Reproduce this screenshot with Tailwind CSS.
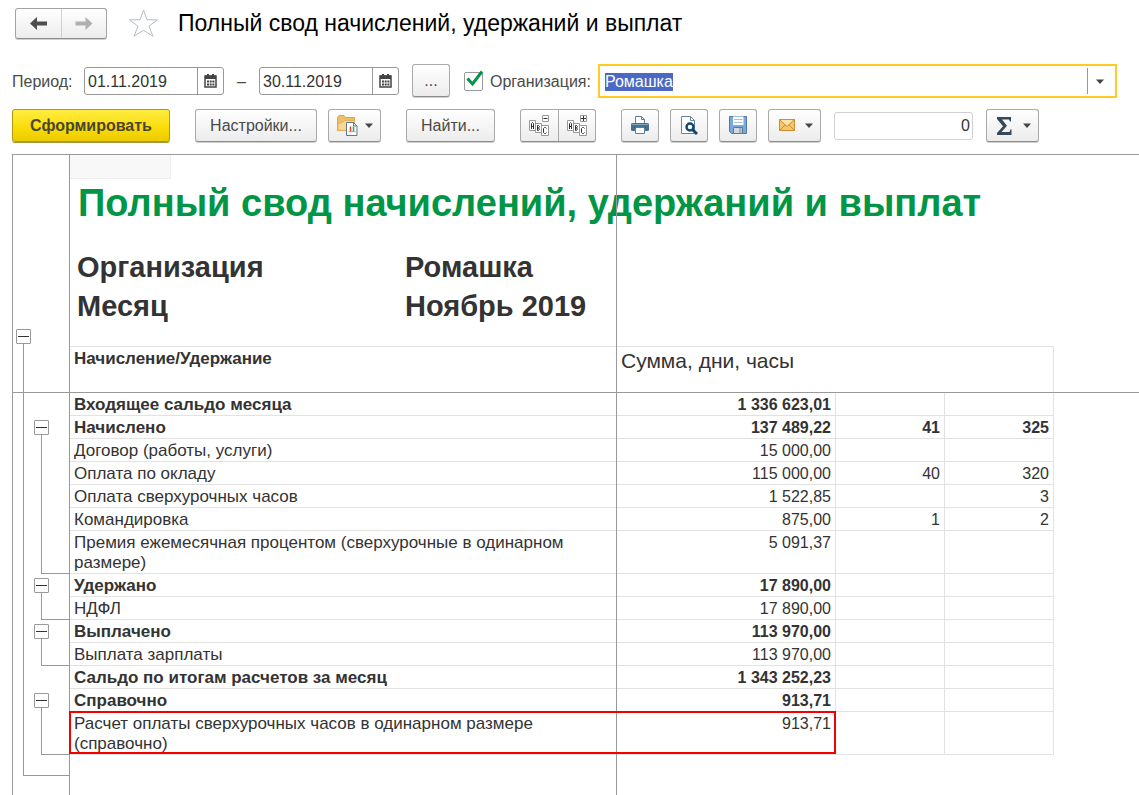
<!DOCTYPE html>
<html lang="ru">
<head>
<meta charset="utf-8">
<meta name="viewport" content="width=device-width, initial-scale=1">
<title>Полный свод начислений, удержаний и выплат</title>
<script src="https://cdn.jsdelivr.net/npm/@tailwindcss/browser@4"></script>
</head>
<body class="flex min-h-screen flex-col overflow-x-hidden bg-white font-['Liberation_Sans',Arial,sans-serif] text-base text-[#4a4a4a]">

<header class="flex h-[46px] items-center pl-[15px]">
  <nav class="flex h-[31px] rounded-[3px] border border-[#a3a3a3] border-b-[#8c8c8c] bg-linear-to-b from-white to-[#ececec] shadow-[0_1px_0_#d0d0d0]">
    <button type="button" aria-label="Назад" class="flex w-[46px] items-center justify-center border-r border-[#d0d0d0]">
      <svg width="19" height="15" viewBox="0 0 19 15"><path d="M1 7.500 8 1V5.500H18V9.500H8V14Z" fill="#4d4d4d"/></svg>
    </button>
    <button type="button" aria-label="Вперед" class="flex w-[44px] items-center justify-center">
      <svg width="18" height="15" viewBox="0 0 18 15"><path d="M17.500 7.500 10.500 1V5.500H.5V9.500H10.500V14Z" fill="#b0b0b0"/></svg>
    </button>
  </nav>
  <button type="button" aria-label="Добавить в избранное" class="ml-[21px]">
    <svg width="31" height="30" viewBox="0 0 31 30"><path d="M15.500 2 18.900 11.700 29.500 11.900 21 18.200 25 28.200 15.500 22.300 6 28.200 10 18.200 1.500 11.900 12.100 11.700Z" fill="#fff" stroke="#b4bcc4"/></svg>
  </button>
  <div class="ml-[19px] text-[23px] leading-7 whitespace-nowrap text-black">Полный свод начислений, удержаний и выплат</div>
</header>

<main class="flex flex-1 flex-col pl-3">
  <div class="mt-[18px] flex h-[34px] items-center pr-[22px]">
    <label for="from" class="w-[72px] shrink-0 pt-px">Период:</label>
    <div class="flex h-[28px] w-[140px] shrink-0 rounded-[3px] border border-[#999]">
      <input id="from" type="text" value="01.11.2019" class="w-[112px] min-w-0 pt-px pl-[3px] text-[#333] outline-none">
      <button type="button" aria-label="Выбрать дату начала" class="flex flex-1 items-center justify-center border-l border-[#999]">
        <svg width="13" height="14" viewBox="0 0 13 14"><path d="M1 2H12V13H1Z" fill="none" stroke="#444" stroke-width="1.500"/><path d="M1 1.500H12V5H1ZM3 0h2v3H3ZM8 0h2v3H8Z" fill="#444"/><path d="M3 6.500h2v2H3ZM5.700 6.500h2v2h-2ZM8.400 6.500h2v2h-2ZM3 9.500h2v2H3ZM5.700 9.500h2v2h-2ZM8.400 9.500h2v2h-2Z" fill="#444"/></svg>
      </button>
    </div>
    <label for="to" class="w-[35px] shrink-0 pt-px text-center">–</label>
    <div class="flex h-[28px] w-[140px] shrink-0 rounded-[3px] border border-[#999]">
      <input id="to" type="text" value="30.11.2019" class="w-[112px] min-w-0 pt-px pl-[3px] text-[#333] outline-none">
      <button type="button" aria-label="Выбрать дату окончания" class="flex flex-1 items-center justify-center border-l border-[#999]">
        <svg width="13" height="14" viewBox="0 0 13 14"><path d="M1 2H12V13H1Z" fill="none" stroke="#444" stroke-width="1.500"/><path d="M1 1.500H12V5H1ZM3 0h2v3H3ZM8 0h2v3H8Z" fill="#444"/><path d="M3 6.500h2v2H3ZM5.700 6.500h2v2h-2ZM8.400 6.500h2v2h-2ZM3 9.500h2v2H3ZM5.700 9.500h2v2h-2ZM8.400 9.500h2v2h-2Z" fill="#444"/></svg>
      </button>
    </div>
    <button type="button" class="ml-[13px] h-[33px] w-[38px] shrink-0 self-start rounded-[3px] border border-[#a9a9a9] border-b-[#8c8c8c] bg-linear-to-b from-white to-[#ececec] shadow-[0_1px_0_#d0d0d0]">...</button>
    <span class="relative ml-[14px] h-[19px] w-[19px] shrink-0">
      <input id="use-org" type="checkbox" aria-label="Отбор по организации" checked class="block h-[19px] w-[19px] appearance-none rounded-[2px] border border-[#999] bg-white">
      <svg class="pointer-events-none absolute -top-[2px] left-[2px]" width="18" height="18" viewBox="0 0 18 18"><path d="M1.500 8.500 6.500 14 16 1.500" fill="none" stroke="#009646" stroke-width="3"/></svg>
    </span>
    <label for="org" class="ml-[7px] w-[108px] shrink-0 pt-px">Организация:</label>
    <div class="flex h-[34px] min-w-0 flex-1 items-center border-2 border-[#ffcb22]">
      <input id="org" type="text" value="Ромашка" class="h-full min-w-0 flex-1 pt-px pl-[5px] text-[#333] outline-none selection:bg-[#4a69c4] selection:text-white">
      <button type="button" aria-label="Открыть список организаций" class="flex h-[26px] w-7 items-center justify-center border-l border-[#999] pr-1">
        <svg width="8" height="5" viewBox="0 0 8 5"><path d="M0 .5H8L4 5Z" fill="#444"/></svg>
      </button>
    </div>
  </div>

  <div class="mt-[11px] flex h-[33px] items-center">
    <button type="button" class="h-[33px] w-[158px] shrink-0 rounded-[3px] border border-[#b19a12] bg-linear-to-b from-[#ffec3d] via-[#fbdf09] to-[#eccb00] font-bold text-[#4a4636] shadow-[0_1px_0_#a8963a]">Сформировать</button>
    <button type="button" class="ml-[25px] h-[33px] w-[122px] shrink-0 rounded-[3px] border border-[#a9a9a9] border-b-[#8c8c8c] bg-linear-to-b from-white to-[#ececec] shadow-[0_1px_0_#d0d0d0]">Настройки...</button>
    <button type="button" aria-label="Варианты отчета" class="ml-[11px] flex h-[33px] w-[53px] shrink-0 items-center justify-between rounded-[3px] border border-[#a9a9a9] border-b-[#8c8c8c] bg-linear-to-b from-white to-[#ececec] pr-[7px] pl-2 shadow-[0_1px_0_#d0d0d0]">
      <svg width="21" height="21" viewBox="0 0 21 21"><path d="M.5 15.500V2.500L2 .5H7L8.500 2.500H17.500V15.500Z" fill="#edc068" stroke="#dba548"/><path d="M1 15.500V8.500L5.500 7.500 7 5.500H17.500V15.500Z" fill="#f8d793" stroke="#e3b05a"/><path d="M9.500 7.500H16.500L20 11V20.500H9.500Z" fill="#fff" stroke="#5a7890"/><path d="M16.500 7.500V11H20" fill="none" stroke="#5a7890"/><path d="M13.500 11.500V16" stroke="#e03c2b" stroke-width="1.500"/><path d="M16.500 11.500V16" stroke="#39a84a" stroke-width="1.500"/><path d="M11.500 16.500H18.500" stroke="#e09080"/></svg>
      <svg width="8" height="5" viewBox="0 0 8 5"><path d="M0 .5H8L4 5Z" fill="#444"/></svg>
    </button>
    <button type="button" class="ml-[25px] h-[33px] w-[89px] shrink-0 rounded-[3px] border border-[#a9a9a9] border-b-[#8c8c8c] bg-linear-to-b from-white to-[#ececec] shadow-[0_1px_0_#d0d0d0]">Найти...</button>
    <div class="ml-[25px] flex h-[33px] w-[76px] shrink-0 rounded-[3px] border border-[#a9a9a9] border-b-[#8c8c8c] bg-linear-to-b from-white to-[#ececec] shadow-[0_1px_0_#d0d0d0]">
      <button type="button" aria-label="Свернуть группировки" class="flex w-[38px] items-center justify-center border-r border-[#a9a9a9]">
        <svg width="21" height="21" viewBox="0 0 21 21"><g fill="#fff" stroke="#999"><path d="M.5 5.500h6v10h-6ZM6.500 8.500h6v9h-6ZM12.500 10.500h7v10h-7ZM13.500.5h6v6h-6Z"/></g><g fill="none" stroke="#333"><path d="M2.500 14V8.500L3.500 7.500 4.500 8.500V14M2.500 11.500h2M8.500 15.500v-5h1l1 1-1 1.500 1 1-1 1.500h-1M8.500 13h1M17.500 13.500l-1-1h-1l-1 1v4l1 1h1l1-1M14.500 3.500h4"/></g></svg>
      </button>
      <button type="button" aria-label="Развернуть группировки" class="flex flex-1 items-center justify-center">
        <svg width="20" height="21" viewBox="0 0 20 21"><g fill="#fff" stroke="#999"><path d="M.5 5.500h6v10h-6ZM6.500 8.500h6v9h-6ZM12.500 10.500h7v10h-7ZM13.500.5h6v6h-6Z"/></g><g fill="none" stroke="#333"><path d="M2.500 14V8.500L3.500 7.500 4.500 8.500V14M2.500 11.500h2M8.500 15.500v-5h1l1 1-1 1.500 1 1-1 1.500h-1M8.500 13h1M17.500 13.500l-1-1h-1l-1 1v4l1 1h1l1-1M14 3.500h5M16.500 1v5"/></g></svg>
      </button>
    </div>
    <button type="button" aria-label="Печать" class="ml-[25px] flex h-[33px] w-[38px] shrink-0 items-center justify-center rounded-[3px] border border-[#a9a9a9] border-b-[#8c8c8c] bg-linear-to-b from-white to-[#ececec] shadow-[0_1px_0_#d0d0d0]">
      <svg width="18" height="19" viewBox="0 0 18 19"><path d="M4.500 8V.5H10.500L13.500 3.500V8" fill="#fff" stroke="#5f7d94"/><path d="M10.500.5V3.500H13.500" fill="none" stroke="#5f7d94"/><rect y="7" width="18" height="8" rx="1.500" fill="#48708f"/><path d="M1 8.500H17" stroke="#7fa3bd"/><path d="M3 11.500H15" stroke="#2d4c63"/><path d="M4.500 11.500H13.500V17.500H4.500Z" fill="#fff" stroke="#5f7d94"/></svg>
    </button>
    <button type="button" aria-label="Предварительный просмотр" class="ml-[11px] flex h-[33px] w-[38px] shrink-0 items-center justify-center rounded-[3px] border border-[#a9a9a9] border-b-[#8c8c8c] bg-linear-to-b from-white to-[#ececec] shadow-[0_1px_0_#d0d0d0]">
      <svg width="18" height="19" viewBox="0 0 18 19"><path d="M1.500.5H10.500L14.500 4.500V17.500H1.500Z" fill="#fff" stroke="#6a8496"/><path d="M10.500.5V4.500H14.500" fill="none" stroke="#6a8496"/><circle cx="10" cy="11" r="3.500" fill="#fff" stroke="#10466f" stroke-width="2.400"/><path d="M12.500 13.500 17 18" stroke="#10466f" stroke-width="3"/></svg>
    </button>
    <button type="button" aria-label="Сохранить" class="ml-[11px] flex h-[33px] w-[38px] shrink-0 items-center justify-center rounded-[3px] border border-[#a9a9a9] border-b-[#8c8c8c] bg-linear-to-b from-white to-[#ececec] shadow-[0_1px_0_#d0d0d0]">
      <svg width="18" height="19" viewBox="0 0 18 19"><path d="M.5.5H17.500V17.500H2.500L.5 15.500Z" fill="#78a8dc" stroke="#5079a5"/><path d="M4 .5H14.500V9H4Z" fill="#fff"/><path d="M5 3.500H13.500M5 6.500H13.500" stroke="#a9bfd2"/><path d="M4.500 11.500H13.500V17.500H4.500Z" fill="#d3d9dd" stroke="#5c7b96"/><path d="M10 12V17H12.500V12Z" fill="#a5b0b8"/></svg>
    </button>
    <button type="button" aria-label="Отправить по почте" class="ml-[11px] flex h-[33px] w-[53px] shrink-0 items-center justify-between rounded-[3px] border border-[#a9a9a9] border-b-[#8c8c8c] bg-linear-to-b from-white to-[#ececec] pr-[7px] pl-[10px] shadow-[0_1px_0_#d0d0d0]">
      <svg width="16" height="13" viewBox="0 0 16 13"><path d="M.5.5H15.500V11.500H.5Z" fill="#f3c56c" stroke="#cc8f2c"/><path d="M1 11 6 6M15 11 10 6" stroke="#cc8f2c"/><path d="M.5.5 8 7.500 15.500.5Z" fill="#fbe2a7" stroke="#cc8f2c"/></svg>
      <svg width="8" height="5" viewBox="0 0 8 5"><path d="M0 .5H8L4 5Z" fill="#444"/></svg>
    </button>
    <input type="text" aria-label="Сумма выделенных ячеек" value="0" class="ml-[13px] h-[28px] w-[139px] shrink-0 rounded-[3px] border border-[#d0d0d0] pt-px pr-[2px] text-right text-[#333] outline-none">
    <button type="button" aria-label="Вычислить сумму" class="ml-[13px] flex h-[33px] w-[53px] shrink-0 items-center justify-between rounded-[3px] border border-[#a9a9a9] border-b-[#8c8c8c] bg-linear-to-b from-white to-[#ececec] pr-[7px] pl-[10px] shadow-[0_1px_0_#d0d0d0]">
      <svg width="15" height="19" viewBox="0 0 15 19"><path d="M0 1H14V5.500H13L12 3.500H5L10 9.800 4.500 16H12.500L13.500 13.500H14.500V19H0V17L6 10.300 0 3Z" fill="#34495a"/></svg>
      <svg width="8" height="5" viewBox="0 0 8 5"><path d="M0 .5H8L4 5Z" fill="#444"/></svg>
    </button>
  </div>

  <section class="relative mt-3 flex flex-1 border-t border-l border-[#999] text-[#333]">
    <!-- group outline -->
    <div class="w-[57px] shrink-0 border-r border-[#999] pt-[174px]">
      <button type="button" aria-label="Свернуть отчет" class="ml-[3px] flex h-[15px] w-[15px] items-center justify-center rounded-[1px] border border-[#999]"><span class="h-px w-[11px] bg-[#333]"></span></button>
      <div class="ml-[10px] border-b border-l border-[#999] pt-[76px] pb-5">
        <button type="button" aria-label="Свернуть: Начислено" class="ml-[10px] flex h-[15px] w-[15px] items-center justify-center rounded-[1px] border border-[#999]"><span class="h-px w-[11px] bg-[#333]"></span></button>
        <div class="ml-[17px] h-[139px] border-b border-l border-[#999]"></div>
        <button type="button" aria-label="Свернуть: Удержано" class="mt-1 ml-[10px] flex h-[15px] w-[15px] items-center justify-center rounded-[1px] border border-[#999]"><span class="h-px w-[11px] bg-[#333]"></span></button>
        <div class="ml-[17px] h-[27px] border-b border-l border-[#999]"></div>
        <button type="button" aria-label="Свернуть: Выплачено" class="mt-1 ml-[10px] flex h-[15px] w-[15px] items-center justify-center rounded-[1px] border border-[#999]"><span class="h-px w-[11px] bg-[#333]"></span></button>
        <div class="ml-[17px] h-[27px] border-b border-l border-[#999]"></div>
        <button type="button" aria-label="Свернуть: Справочно" class="mt-[27px] ml-[10px] flex h-[15px] w-[15px] items-center justify-center rounded-[1px] border border-[#999]"><span class="h-px w-[11px] bg-[#333]"></span></button>
        <div class="ml-[17px] h-[47px] border-b border-l border-[#999]"></div>
      </div>
    </div>

    <!-- sheet -->
    <div class="relative min-w-0 flex-1">
      <div class="h-6 w-[101px] border-r border-b border-[#eee] bg-[#f8f8f8]"></div>
      <h1 class="pl-2 text-[38px] leading-12 font-bold whitespace-nowrap text-[#009646]">Полный свод начислений, удержаний и выплат</h1>
      <dl class="mt-[21px] mb-5 grid grid-cols-[328px_1fr] pl-[7px] text-[29px] leading-[39px] font-bold">
        <dt>Организация</dt><dd>Ромашка</dd>
        <dt>Месяц</dt><dd>Ноябрь 2019</dd>
      </dl>

      <div class="relative w-[984px]">
        <table class="w-full table-fixed border-separate border-spacing-0 text-right leading-5 [&_td]:border-r [&_td]:border-b [&_td]:border-[#e2e2e2] [&_td]:px-1 [&_td]:pt-[2px] [&_td]:align-top [&_th]:border-[#e2e2e2] [&_th]:px-1 [&_th]:align-top [&_tbody_th]:border-r [&_tbody_th]:border-b [&_tbody_th]:pt-[2px] [&_tbody_th]:text-left [&_tbody_th]:text-[17px] [&_tbody_th]:leading-5 [&_tbody_th]:font-normal">
          <colgroup><col class="w-[547px]"><col class="w-[219px]"><col class="w-[109px]"><col class="w-[109px]"></colgroup>
          <thead>
            <tr class="h-[47px] text-left">
              <th scope="col" class="border-t border-r border-b pt-[2px] text-[17px] leading-5 font-bold">Начисление/Удержание</th>
              <th scope="colgroup" colspan="3" class="border-t border-r border-b pt-1 text-[21px] leading-5 font-normal">Сумма, дни, часы</th>
            </tr>
          </thead>
          <tbody>
            <tr class="font-bold"><th scope="row"><b>Входящее сальдо месяца</b></th><td>1 336 623,01</td><td></td><td></td></tr>
            <tr class="font-bold"><th scope="row"><b>Начислено</b></th><td>137 489,22</td><td>41</td><td>325</td></tr>
            <tr><th scope="row">Договор (работы, услуги)</th><td>15 000,00</td><td></td><td></td></tr>
            <tr><th scope="row">Оплата по окладу</th><td>115 000,00</td><td>40</td><td>320</td></tr>
            <tr><th scope="row">Оплата сверхурочных часов</th><td>1 522,85</td><td></td><td>3</td></tr>
            <tr><th scope="row">Командировка</th><td>875,00</td><td>1</td><td>2</td></tr>
            <tr><th scope="row">Премия ежемесячная процентом (сверхурочные в одинарном<br>размере)</th><td>5 091,37</td><td></td><td></td></tr>
            <tr class="font-bold"><th scope="row"><b>Удержано</b></th><td>17 890,00</td><td></td><td></td></tr>
            <tr><th scope="row">НДФЛ</th><td>17 890,00</td><td></td><td></td></tr>
            <tr class="font-bold"><th scope="row"><b>Выплачено</b></th><td>113 970,00</td><td></td><td></td></tr>
            <tr><th scope="row">Выплата зарплаты</th><td>113 970,00</td><td></td><td></td></tr>
            <tr class="font-bold"><th scope="row"><b>Сальдо по итогам расчетов за месяц</b></th><td>1 343 252,23</td><td></td><td></td></tr>
            <tr class="font-bold"><th scope="row"><b>Справочно</b></th><td>913,71</td><td></td><td></td></tr>
            <tr><th scope="row">Расчет оплаты сверхурочных часов в одинарном размере<br>(справочно)</th><td>913,71</td><td></td><td></td></tr>
          </tbody>
        </table>
        <!-- highlighted row -->
        <div class="pointer-events-none absolute bottom-px -left-px z-10 h-[43px] w-[767px] border-2 border-[#f40000]"></div>
      </div>
      <!-- frozen column edge -->
      <div class="pointer-events-none absolute inset-y-0 left-[546px] w-px bg-[#999]"></div>
    </div>
    <!-- frozen header edge -->
    <div class="pointer-events-none absolute inset-x-0 top-[237px] h-px bg-[#999]"></div>
  </section>
</main>
<script>
  const org = document.getElementById('org');
  org.focus();
  org.select();
</script>
</body>
</html>
